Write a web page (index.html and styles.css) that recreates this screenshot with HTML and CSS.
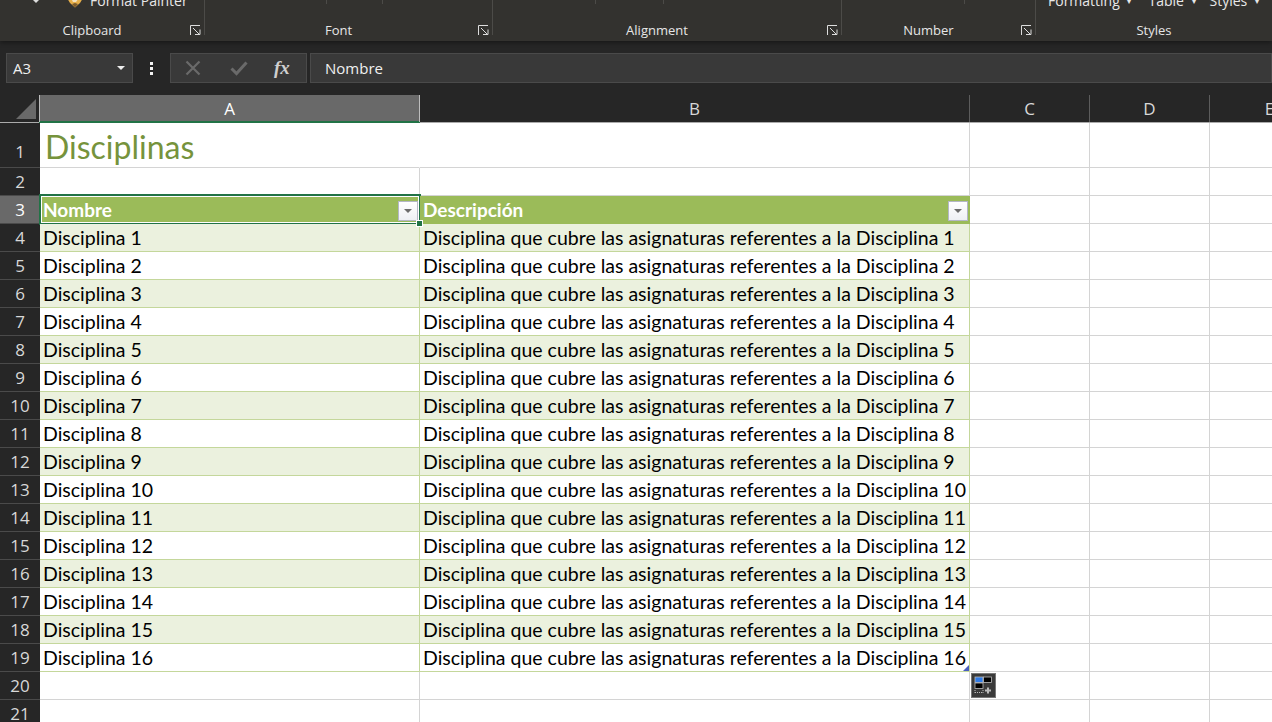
FILE: index.html
```html
<!DOCTYPE html>
<html lang="es">
  <head>
    <meta charset="UTF-8" />
    <title>Disciplinas - Excel</title>
    <link rel="stylesheet" href="styles.css">
  </head>
  <body>
    <div class="ribbon">
      <div class="group group-clipboard">
        <div class="tools tools-clipboard">
          <svg class="caret-small" width="8" height="4" viewBox="0 0 8 4"><path d="M1 0h6L4 3z" fill="#ddd"/></svg>
          <span class="painter">
            <svg class="painter-icon" width="18" height="10" viewBox="0 0 18 10"><path d="M1 0h16l-3 5-5 4.500-5-4.500z" fill="#e8b04a"/><path d="M5 0h8l-3 4H7z" fill="#f4e3c0"/><path d="M6 6l3 3.500 3-3.500-3-1z" fill="#7a5a2c"/></svg>
            Format Painter
          </span>
        </div>
        <div class="group-label">Clipboard
          <svg class="launcher" width="11" height="11" viewBox="0 0 11 11"><path d="M0.5 10V0.5H10M3 3l6.5 6.5M5 9.5h5V4.5" fill="none" stroke="#ddd"/></svg>
        </div>
      </div>
      <div class="group group-font">
        <div class="tools"><i class="tick tick-font-1"></i><i class="tick tick-font-2"></i></div>
        <div class="group-label">Font
          <svg class="launcher" width="11" height="11" viewBox="0 0 11 11"><path d="M0.5 10V0.5H10M3 3l6.5 6.5M5 9.5h5V4.5" fill="none" stroke="#ddd"/></svg>
        </div>
      </div>
      <div class="group group-align">
        <div class="tools"><i class="tick tick-align-1"></i><i class="tick tick-align-2"></i></div>
        <div class="group-label">Alignment
          <svg class="launcher" width="11" height="11" viewBox="0 0 11 11"><path d="M0.5 10V0.5H10M3 3l6.5 6.5M5 9.5h5V4.5" fill="none" stroke="#ddd"/></svg>
        </div>
      </div>
      <div class="group group-number">
        <div class="tools"><i class="tick tick-number"></i></div>
        <div class="group-label">Number
          <svg class="launcher" width="11" height="11" viewBox="0 0 11 11"><path d="M0.5 10V0.5H10M3 3l6.5 6.5M5 9.5h5V4.5" fill="none" stroke="#ddd"/></svg>
        </div>
      </div>
      <div class="group group-styles">
        <div class="tools tools-styles">
          <span>Formatting <b>▾</b></span>
          <span>Table <b>▾</b></span>
          <span>Styles <b>▾</b></span>
        </div>
        <div class="group-label label-plain">Styles</div>
      </div>
    </div>

    <div class="formula-bar">
      <div class="name-box">
        <span>A3</span>
        <svg width="8" height="4" viewBox="0 0 8 4"><path d="M0 0h8L4 4z" fill="#eee"/></svg>
      </div>
      <div class="dots"><i></i><i></i><i></i></div>
      <div class="fx-box">
        <svg width="16" height="16" viewBox="0 0 16 16"><path d="M1.500 1.500l13 13M14.500 1.500l-13 13" stroke="#6a6a6a" stroke-width="2.200"/></svg>
        <svg width="18" height="16" viewBox="0 0 18 16"><path d="M1.500 8.500l5 5L16.500 2.500" fill="none" stroke="#6a6a6a" stroke-width="3"/></svg>
        <span class="fx-label">fx</span>
      </div>
      <div class="formula-input">Nombre</div>
    </div>

    <div class="sheet">
      <div class="col-headers">
        <div class="corner"><i></i></div>
        <div class="col-head col-selected">A</div>
        <div class="col-head">B</div>
        <div class="col-head">C</div>
        <div class="col-head">D</div>
        <div class="col-head">E</div>
      </div>

      <div class="row row-title">
        <div class="row-head">1</div>
        <div class="cell title">Disciplinas</div>
        <div class="cell"></div><div class="cell"></div><div class="cell"></div><div class="cell"></div>
      </div>
      <div class="row">
        <div class="row-head">2</div>
        <div class="cell"></div><div class="cell"></div><div class="cell"></div><div class="cell"></div><div class="cell"></div>
      </div>
      <div class="row row-table-head">
        <div class="row-head row-selected">3</div>
        <div class="cell th cell-active">Nombre
          <span class="filter"><svg width="8" height="4" viewBox="0 0 8 4"><path d="M0 0h8L4 4z" fill="#6c6c6c"/></svg></span>
          <i class="selection"></i><i class="selection-handle"></i>
        </div>
        <div class="cell th">Descripción
          <span class="filter"><svg width="8" height="4" viewBox="0 0 8 4"><path d="M0 0h8L4 4z" fill="#6c6c6c"/></svg></span>
        </div>
        <div class="cell"></div><div class="cell"></div><div class="cell"></div>
      </div>
      <div class="row band"><div class="row-head">4</div><div class="cell td">Disciplina 1</div><div class="cell td">Disciplina que cubre las asignaturas referentes a la Disciplina 1</div><div class="cell"></div><div class="cell"></div><div class="cell"></div></div>
      <div class="row"><div class="row-head">5</div><div class="cell td">Disciplina 2</div><div class="cell td">Disciplina que cubre las asignaturas referentes a la Disciplina 2</div><div class="cell"></div><div class="cell"></div><div class="cell"></div></div>
      <div class="row band"><div class="row-head">6</div><div class="cell td">Disciplina 3</div><div class="cell td">Disciplina que cubre las asignaturas referentes a la Disciplina 3</div><div class="cell"></div><div class="cell"></div><div class="cell"></div></div>
      <div class="row"><div class="row-head">7</div><div class="cell td">Disciplina 4</div><div class="cell td">Disciplina que cubre las asignaturas referentes a la Disciplina 4</div><div class="cell"></div><div class="cell"></div><div class="cell"></div></div>
      <div class="row band"><div class="row-head">8</div><div class="cell td">Disciplina 5</div><div class="cell td">Disciplina que cubre las asignaturas referentes a la Disciplina 5</div><div class="cell"></div><div class="cell"></div><div class="cell"></div></div>
      <div class="row"><div class="row-head">9</div><div class="cell td">Disciplina 6</div><div class="cell td">Disciplina que cubre las asignaturas referentes a la Disciplina 6</div><div class="cell"></div><div class="cell"></div><div class="cell"></div></div>
      <div class="row band"><div class="row-head">10</div><div class="cell td">Disciplina 7</div><div class="cell td">Disciplina que cubre las asignaturas referentes a la Disciplina 7</div><div class="cell"></div><div class="cell"></div><div class="cell"></div></div>
      <div class="row"><div class="row-head">11</div><div class="cell td">Disciplina 8</div><div class="cell td">Disciplina que cubre las asignaturas referentes a la Disciplina 8</div><div class="cell"></div><div class="cell"></div><div class="cell"></div></div>
      <div class="row band"><div class="row-head">12</div><div class="cell td">Disciplina 9</div><div class="cell td">Disciplina que cubre las asignaturas referentes a la Disciplina 9</div><div class="cell"></div><div class="cell"></div><div class="cell"></div></div>
      <div class="row"><div class="row-head">13</div><div class="cell td">Disciplina 10</div><div class="cell td">Disciplina que cubre las asignaturas referentes a la Disciplina 10</div><div class="cell"></div><div class="cell"></div><div class="cell"></div></div>
      <div class="row band"><div class="row-head">14</div><div class="cell td">Disciplina 11</div><div class="cell td">Disciplina que cubre las asignaturas referentes a la Disciplina 11</div><div class="cell"></div><div class="cell"></div><div class="cell"></div></div>
      <div class="row"><div class="row-head">15</div><div class="cell td">Disciplina 12</div><div class="cell td">Disciplina que cubre las asignaturas referentes a la Disciplina 12</div><div class="cell"></div><div class="cell"></div><div class="cell"></div></div>
      <div class="row band"><div class="row-head">16</div><div class="cell td">Disciplina 13</div><div class="cell td">Disciplina que cubre las asignaturas referentes a la Disciplina 13</div><div class="cell"></div><div class="cell"></div><div class="cell"></div></div>
      <div class="row"><div class="row-head">17</div><div class="cell td">Disciplina 14</div><div class="cell td">Disciplina que cubre las asignaturas referentes a la Disciplina 14</div><div class="cell"></div><div class="cell"></div><div class="cell"></div></div>
      <div class="row band"><div class="row-head">18</div><div class="cell td">Disciplina 15</div><div class="cell td">Disciplina que cubre las asignaturas referentes a la Disciplina 15</div><div class="cell"></div><div class="cell"></div><div class="cell"></div></div>
      <div class="row"><div class="row-head">19</div><div class="cell td">Disciplina 16</div><div class="cell td cell-last">Disciplina que cubre las asignaturas referentes a la Disciplina 16<i class="resize-corner"></i></div><div class="cell"></div><div class="cell"></div><div class="cell"></div></div>
      <div class="row"><div class="row-head">20</div><div class="cell"></div><div class="cell"></div><div class="cell quick-host">
        <span class="quick-analysis">
          <svg width="20" height="20" viewBox="0 0 20 20">
            <rect x="1" y="1" width="8" height="5.500" fill="#2f7ae5" stroke="#bbb" stroke-width="0.800"/>
            <rect x="9.500" y="1" width="8" height="5.500" fill="#000" stroke="#bbb" stroke-width="0.800"/>
            <rect x="1" y="7" width="8" height="5.500" fill="#000" stroke="#bbb" stroke-width="0.800"/>
            <path d="M1 16.500h8M1 14v3M9 14v3" stroke="#bbb" stroke-dasharray="1 1"/>
            <path d="M14 11.500v6M11 14.500h6" stroke="#bbb" stroke-width="2"/>
          </svg>
        </span>
      </div><div class="cell"></div><div class="cell"></div></div>
      <div class="row"><div class="row-head">21</div><div class="cell"></div><div class="cell"></div><div class="cell"></div><div class="cell"></div><div class="cell"></div></div>
    </div>
  </body>
</html>
```

FILE: styles.css
```css
/* Ventana */
html,
body {
  height: 100%;
}

body {
  margin: 0;
  overflow: hidden;
  background-color: #262626;
  font-family: "Open Sans", "Noto Sans", sans-serif;
  color: #f0f0f0;
}

/* Cinta */
.ribbon {
  position: relative;
  display: flex;
  height: 41px;
  background-color: #33322f;
  box-shadow: 0 2px 4px rgba(0, 0, 0, 0.35);
}

.group {
  position: relative;
  display: flex;
  flex-direction: column;
  height: 35px;
  border-right: 1px solid #4c4b48;
  box-sizing: border-box;
}

.group-clipboard { width: 205px; }
.group-font { width: 288px; }
.group-align { width: 349px; }
.group-number { width: 194px; }
.group-styles { flex: 1; border-right: none; }

.tools {
  position: relative;
  flex: none;
  height: 20px;
  overflow: hidden;
  font-size: 14px;
  line-height: 14px;
  color: #e8e8e8;
}

.tools-clipboard .caret-small {
  position: absolute;
  left: 32px;
  top: 0;
}

.painter {
  position: absolute;
  left: 66px;
  top: -7px;
  display: flex;
  align-items: center;
  gap: 6px;
  white-space: nowrap;
}

.painter-icon {
  margin-top: 5px;
}

.tools-styles {
  display: flex;
  gap: 17px;
  padding-left: 12px;
  margin-top: -6px;
  height: 26px;
}

.tools-styles span:last-child {
  margin-left: -3px;
}

.tools-styles b {
  margin-left: 4px;
  font-size: 8px;
  font-weight: 400;
  vertical-align: 2px;
}

.tick {
  position: absolute;
  top: 0;
  width: 1px;
  height: 4px;
  background-color: #4c4b48;
}

.tick-font-1 { left: 121px; }
.tick-font-2 { left: 177px; }
.tick-align-1 { left: 102px; }
.tick-align-2 { left: 170px; }
.tick-number { left: 122px; }

.group-label {
  position: relative;
  flex: none;
  padding-right: 20px;
  text-align: center;
  font-size: 13px;
  line-height: 20px;
  color: #e6e6e6;
}

.label-plain {
  padding-right: 0;
}

.launcher {
  position: absolute;
  right: 3px;
  top: 5px;
}

/* Barra de fórmulas */
.formula-bar {
  display: flex;
  align-items: stretch;
  height: 30px;
  margin-top: 12px;
  padding-left: 6px;
}

.name-box,
.fx-box,
.formula-input {
  box-sizing: border-box;
  background-color: #393939;
  border: 1px solid #4a4a4a;
}

.name-box {
  display: flex;
  align-items: center;
  justify-content: space-between;
  width: 127px;
  padding: 0 7px 0 6px;
  font-size: 15px;
}

.dots {
  display: flex;
  flex-direction: column;
  align-items: center;
  justify-content: center;
  gap: 2px;
  width: 37px;
}

.dots i {
  width: 3px;
  height: 3px;
  background-color: #f2f2f2;
}

.fx-box {
  display: flex;
  align-items: center;
  width: 137px;
  padding-left: 14px;
}

.fx-box svg + svg {
  margin-left: 29px;
}

.fx-label {
  margin-left: 26px;
  font-family: "Liberation Serif", serif;
  font-style: italic;
  font-weight: 700;
  font-size: 19px;
  color: #cfcfcf;
}

.formula-input {
  flex: 1;
  margin-left: 3px;
  padding-left: 14px;
  font-size: 15px;
  line-height: 28px;
}

/* Hoja */
.sheet {
  margin-top: 12px;
  width: 1330px;
}

.col-headers,
.row {
  display: grid;
  grid-template-columns: 40px 380px 550px 120px 120px 120px;
}

.col-headers {
  height: 28px;
  box-sizing: border-box;
  border-bottom: 1px solid #ababab;
  background-color: #262626;
}

.corner {
  position: relative;
}

.corner i {
  position: absolute;
  left: 16px;
  top: 4px;
  width: 0;
  height: 0;
  border-left: 20px solid transparent;
  border-bottom: 20px solid #696969;
}

.col-head {
  box-sizing: border-box;
  border-right: 1px solid #5c5c5c;
  text-align: center;
  font-size: 17px;
  line-height: 27px;
  color: #d8d8d8;
}

.col-selected {
  margin-left: -1px;
  background-color: #696969;
  border-left: 1px solid #bdbdbd;
  border-right: 1px solid #bdbdbd;
  box-shadow: inset 0 -1px 0 #217346, 0 1px 0 #217346;
  color: #ffffff;
}

.row {
  height: 28px;
  grid-template-rows: 28px;
}

.row-title {
  height: 45px;
  grid-template-rows: 45px;
}

.row-head {
  box-sizing: border-box;
  background-color: #262626;
  border-bottom: 1px solid #4a4a4a;
  text-align: center;
  font-size: 17px;
  line-height: 28px;
  color: #d8d8d8;
}

.row-title .row-head {
  line-height: 58px;
}

.row-selected {
  background-color: #696969;
  color: #ffffff;
}

.cell {
  position: relative;
  box-sizing: border-box;
  background-color: #ffffff;
  border-right: 1px solid #d4d4d4;
  border-bottom: 1px solid #d4d4d4;
  padding-left: 3px;
  font-family: "Lato", "Open Sans", sans-serif;
  font-size: 19.500px;
  line-height: 28px;
  color: #000000;
  white-space: nowrap;
}

.title {
  padding-left: 5px;
  font-size: 32px;
  line-height: 48px;
  color: #76933c;
  border-right-color: transparent;
}

.th {
  background-color: #9bbb59;
  border-right: 1px solid #9bbb59;
  border-bottom: none;
  font-size: 19px;
  color: #ffffff;
  font-weight: 700;
}

.td {
  border-right: 1px solid #c4d79b;
  border-bottom: 1px solid #c4d79b;
}

.band .td {
  background-color: #ebf1de;
}

.filter {
  position: absolute;
  right: 1px;
  top: 5px;
  display: flex;
  align-items: center;
  justify-content: center;
  width: 20px;
  height: 20px;
  box-sizing: border-box;
  background: linear-gradient(#ffffff, #eef0f4);
  border: 1px solid #b4b7c6;
}

.selection {
  position: absolute;
  left: -1px;
  top: -2px;
  right: -2px;
  bottom: -1px;
  border: 2px solid #217346;
  box-shadow: inset 0 0 0 1px #ffffff;
}

.selection-handle {
  position: absolute;
  right: -4px;
  bottom: -3px;
  width: 5px;
  height: 5px;
  background-color: #217346;
  border: 1px solid #ffffff;
  box-sizing: content-box;
  z-index: 2;
}

.resize-corner {
  position: absolute;
  right: 0;
  bottom: 0;
  width: 0;
  height: 0;
  border-left: 6px solid transparent;
  border-bottom: 6px solid #4a5fc0;
}

.quick-analysis {
  position: absolute;
  left: 1px;
  top: 1px;
  display: flex;
  align-items: center;
  justify-content: center;
  width: 25px;
  height: 25px;
  box-sizing: border-box;
  background-color: #3a3a3a;
  border: 1px solid #777;
}
```
